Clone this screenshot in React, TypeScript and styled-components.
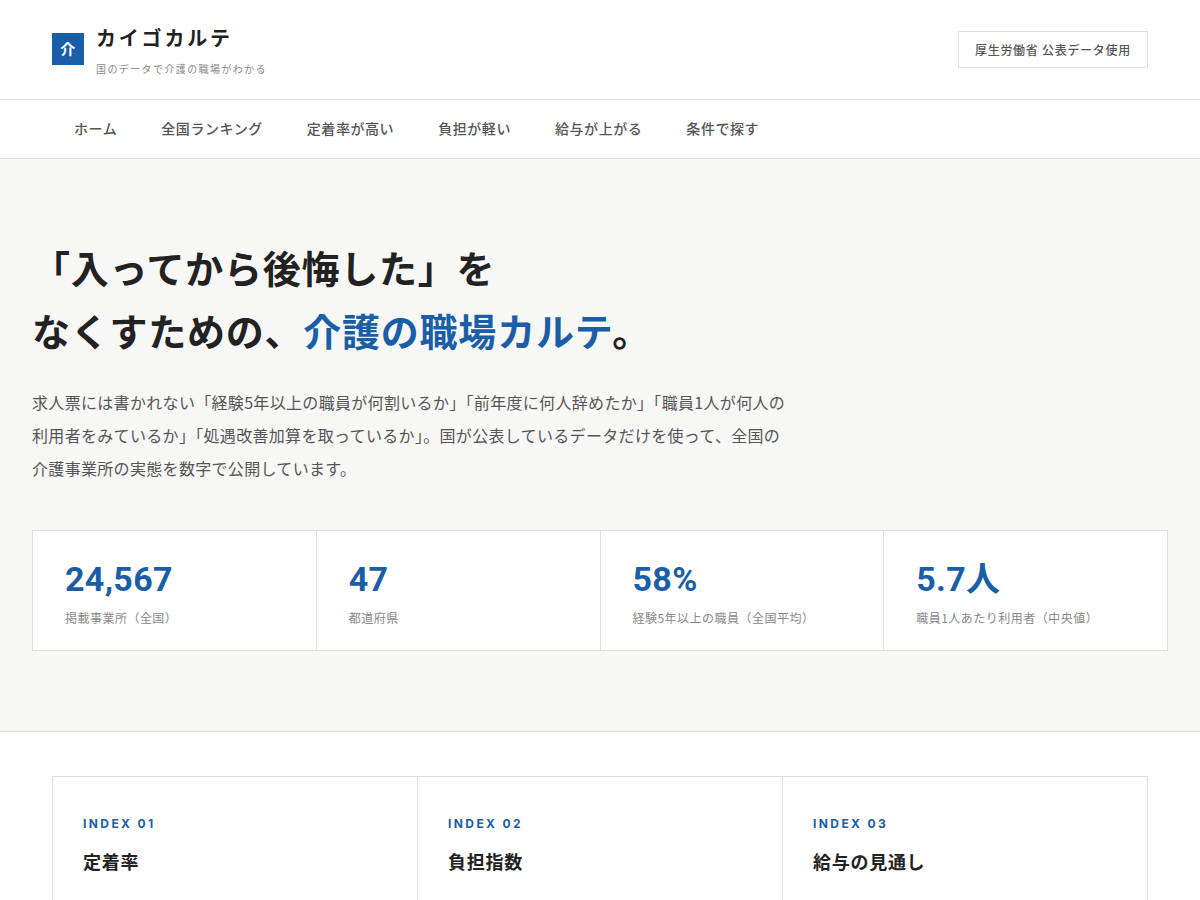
import React from "react";
import styled, { createGlobalStyle } from "styled-components";

const blue = "#1a5ea8";
const ink = "#222222";
const body = "#555555";
const muted = "#888888";
const line = "#e0e0e0";
const tint = "#f7f7f5";

const GlobalStyle = createGlobalStyle`
  *, *::before, *::after { box-sizing: border-box; }
  body {
    margin: 0;
    background: #ffffff;
    color: ${ink};
    font-family: "Noto Sans CJK JP", sans-serif;
    font-size: 16px;
    letter-spacing: 0.02em;
  }
  h1, h2, p, ul, dl, dd { margin: 0; padding: 0; }
`;

const Header = styled.header`
  border-bottom: 1px solid ${line};
`;

const HeaderInner = styled.div`
  max-width: 1200px;
  margin: 0 auto;
  padding: 19px 52px 20px;
  display: flex;
  align-items: center;
  justify-content: space-between;
`;

const Brand = styled.a`
  display: flex;
  align-items: center;
  gap: 12px;
  color: inherit;
  text-decoration: none;
`;

const Mark = styled.span`
  width: 32px;
  height: 32px;
  background: ${blue};
  color: #ffffff;
  display: grid;
  place-items: center;
  font-size: 15px;
  line-height: 32px;
  font-weight: 700;
`;

const BrandText = styled.span`
  display: grid;
  gap: 2px;
`;

const BrandName = styled.span`
  font-size: 20px;
  line-height: 38px;
  font-weight: 700;
  letter-spacing: 0.14em;
`;

const Tagline = styled.span`
  font-size: 10px;
  line-height: 20px;
  letter-spacing: 0.14em;
  color: ${muted};
`;

const SourceBadge = styled.p`
  border: 1px solid ${line};
  padding: 6px 16px;
  font-size: 12px;
  line-height: 23px;
  font-weight: 500;
  letter-spacing: 0.06em;
  color: ${body};
`;

const Nav = styled.nav`
  border-bottom: 1px solid ${line};
`;

const NavList = styled.ul`
  max-width: 1200px;
  margin: 0 auto;
  padding: 0 52px;
  display: flex;
  flex-wrap: wrap;
  list-style: none;
`;

const NavLink = styled.a`
  display: block;
  padding: 15px 22px 17px;
  font-size: 14px;
  line-height: 26px;
  font-weight: 500;
  letter-spacing: 0.04em;
  color: ${body};
  text-decoration: none;
`;

const Hero = styled.section`
  background: ${tint};
  border-bottom: 1px solid ${line};
  padding: 76px 32px 80px;
`;

const HeroInner = styled.div`
  max-width: 1136px;
  margin: 0 auto;
`;

const HeroTitle = styled.h1`
  font-size: 38px;
  line-height: 63px;
  font-weight: 700;
  letter-spacing: 0.02em;
  margin-bottom: 25px;
`;

const Accent = styled.span`
  color: ${blue};
`;

const Lead = styled.p`
  max-width: 760px;
  margin-bottom: 45px;
  line-height: 33px;
  color: ${body};
`;

const Stats = styled.dl`
  display: grid;
  grid-template-columns: repeat(4, 1fr);
  gap: 1px;
  background: ${line};
  border: 1px solid ${line};
`;

const Stat = styled.div`
  background: #ffffff;
  padding: 28px 32px 21px;
  display: flex;
  flex-direction: column-reverse;
  justify-content: flex-end;
  gap: 7px;
`;

const StatValue = styled.dd`
  font-family: Roboto, "Noto Sans CJK JP", sans-serif;
  font-size: 34px;
  line-height: 40px;
  font-weight: 700;
  color: ${blue};
`;

const StatLabel = styled.dt`
  font-size: 12px;
  line-height: 23px;
  letter-spacing: 0.04em;
  color: ${muted};
`;

const IndexSection = styled.section`
  max-width: 1200px;
  margin: 0 auto;
  padding: 44px 52px;
`;

const IndexGrid = styled.div`
  display: grid;
  grid-template-columns: repeat(3, 1fr);
  gap: 1px;
  background: ${line};
  border: 1px solid ${line};
`;

const IndexCard = styled.article`
  background: #ffffff;
  padding: 35px 30px 36px;
`;

const IndexNumber = styled.p`
  font-family: Inter, "Noto Sans CJK JP", sans-serif;
  font-size: 12px;
  line-height: 23px;
  font-weight: 700;
  letter-spacing: 0.2em;
  color: ${blue};
  margin-bottom: 9px;
`;

const IndexTitle = styled.h2`
  font-size: 18px;
  line-height: 34px;
  font-weight: 700;
  letter-spacing: 0.04em;
`;

const navItems = [
  "ホーム",
  "全国ランキング",
  "定着率が高い",
  "負担が軽い",
  "給与が上がる",
  "条件で探す",
];

const stats = [
  { value: "24,567", label: "掲載事業所（全国）" },
  { value: "47", label: "都道府県" },
  { value: "58%", label: "経験5年以上の職員（全国平均）" },
  { value: "5.7人", label: "職員1人あたり利用者（中央値）" },
];

const indexes = [
  { number: "INDEX 01", title: "定着率" },
  { number: "INDEX 02", title: "負担指数" },
  { number: "INDEX 03", title: "給与の見通し" },
];

export default function App() {
  return (
    <div lang="ja">
      <GlobalStyle />
      <Header>
        <HeaderInner>
          <Brand href="#">
            <Mark>介</Mark>
            <BrandText>
              <BrandName>カイゴカルテ</BrandName>
              <Tagline>国のデータで介護の職場がわかる</Tagline>
            </BrandText>
          </Brand>
          <SourceBadge>厚生労働省 公表データ使用</SourceBadge>
        </HeaderInner>
      </Header>
      <Nav>
        <NavList>
          {navItems.map((item) => (
            <li key={item}>
              <NavLink href="#">{item}</NavLink>
            </li>
          ))}
        </NavList>
      </Nav>
      <main>
        <Hero>
          <HeroInner>
            <HeroTitle>
              「入ってから後悔した」を
              <br />
              なくすための、<Accent>介護の職場カルテ</Accent>。
            </HeroTitle>
            <Lead>
              求人票には書かれない「経験5年以上の職員が何割いるか」「前年度に何人辞めたか」「職員1人が何人の利用者をみているか」「処遇改善加算を取っているか」。国が公表しているデータだけを使って、全国の介護事業所の実態を数字で公開しています。
            </Lead>
            <Stats>
              {stats.map((stat) => (
                <Stat key={stat.label}>
                  <StatLabel>{stat.label}</StatLabel>
                  <StatValue>{stat.value}</StatValue>
                </Stat>
              ))}
            </Stats>
          </HeroInner>
        </Hero>
        <IndexSection>
          <IndexGrid>
            {indexes.map((index) => (
              <IndexCard key={index.number}>
                <IndexNumber>{index.number}</IndexNumber>
                <IndexTitle>{index.title}</IndexTitle>
              </IndexCard>
            ))}
          </IndexGrid>
        </IndexSection>
      </main>
    </div>
  );
}
